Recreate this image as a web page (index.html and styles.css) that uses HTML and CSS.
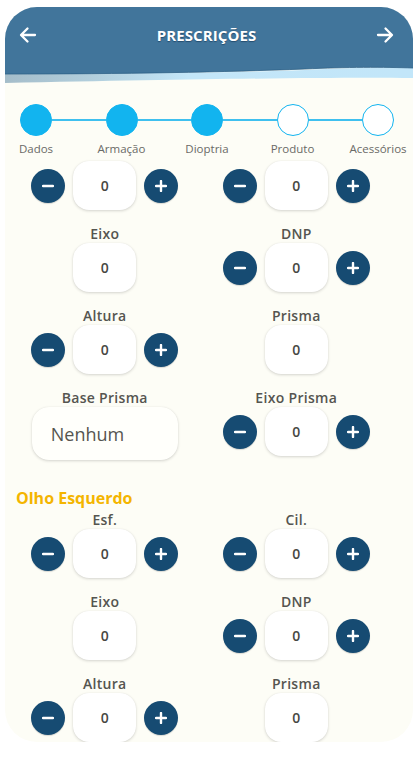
FILE: index.html
```html
<!DOCTYPE html>
<html lang="pt">
<head>
<meta charset="utf-8">
<title>Prescrições</title>
<link rel="stylesheet" href="styles.css">
</head>
<body>
<div class="phone">
  <header class="topbar">
    <svg class="arrow" width="18" height="18" viewBox="0 0 18 18"><path d="M16 9 H2.5 M8.5 2.5 L2 9 L8.5 15.5" fill="none" stroke="#fff" stroke-width="2.3" stroke-linecap="round" stroke-linejoin="round"/></svg>
    <h1 class="title">PRESCRIÇÕES</h1>
    <svg class="arrow" width="18" height="18" viewBox="0 0 18 18"><path d="M2 9 H15.5 M9.5 2.5 L16 9 L9.5 15.5" fill="none" stroke="#fff" stroke-width="2.3" stroke-linecap="round" stroke-linejoin="round"/></svg>
  </header>
  <svg class="wave" width="408" height="22" viewBox="0 0 408 22" preserveAspectRatio="none">
    <defs>
      <linearGradient id="band" x1="0" y1="0" x2="1" y2="0">
        <stop offset="0" stop-color="#a5bdca"/>
        <stop offset="0.22" stop-color="#b2cfdd"/>
        <stop offset="0.45" stop-color="#c3e6f8"/>
        <stop offset="1" stop-color="#c2e6f9"/>
      </linearGradient>
    </defs>
    <path d="M0,11 C120,12 220,11 300,8 C340,6 380,5 408,6 V16 C330,15 200,17 0,21 Z" fill="url(#band)"/>
    <path d="M0,0 H408 V6 C380,5 340,5 300,7 C220,10 120,12 0,12 Z" fill="#41759b"/>
    <path d="M0,12 C120,12 220,10 300,7 C340,5 380,5 408,6" fill="none" stroke="#2f6288" stroke-width="0.8"/>
  </svg>

  <nav class="steps">
    <div class="step"><span class="dot done"></span><span class="step-label">Dados</span></div>
    <span class="link"></span>
    <div class="step"><span class="dot done"></span><span class="step-label">Armação</span></div>
    <span class="link"></span>
    <div class="step"><span class="dot done"></span><span class="step-label">Dioptria</span></div>
    <span class="link"></span>
    <div class="step"><span class="dot"></span><span class="step-label">Produto</span></div>
    <span class="link"></span>
    <div class="step"><span class="dot"></span><span class="step-label">Acessórios</span></div>
  </nav>

  <main class="scroll">
    <section class="eye-grid">
      <div class="field">
        <div class="stepper">
          <button class="btn"><svg width="12" height="12" viewBox="0 0 12 12"><path d="M1 6 H11" stroke="#fff" stroke-width="2.4" stroke-linecap="round"/></svg></button>
          <div class="num-box">0</div>
          <button class="btn"><svg width="12" height="12" viewBox="0 0 12 12"><path d="M1 6 H11 M6 1 V11" stroke="#fff" stroke-width="2.4" stroke-linecap="round"/></svg></button>
        </div>
      </div>
      <div class="field">
        <div class="stepper">
          <button class="btn"><svg width="12" height="12" viewBox="0 0 12 12"><path d="M1 6 H11" stroke="#fff" stroke-width="2.4" stroke-linecap="round"/></svg></button>
          <div class="num-box">0</div>
          <button class="btn"><svg width="12" height="12" viewBox="0 0 12 12"><path d="M1 6 H11 M6 1 V11" stroke="#fff" stroke-width="2.4" stroke-linecap="round"/></svg></button>
        </div>
      </div>

      <div class="field">
        <div class="field-label">Eixo</div>
        <div class="num-box">0</div>
      </div>
      <div class="field">
        <div class="field-label">DNP</div>
        <div class="stepper">
          <button class="btn"><svg width="12" height="12" viewBox="0 0 12 12"><path d="M1 6 H11" stroke="#fff" stroke-width="2.4" stroke-linecap="round"/></svg></button>
          <div class="num-box">0</div>
          <button class="btn"><svg width="12" height="12" viewBox="0 0 12 12"><path d="M1 6 H11 M6 1 V11" stroke="#fff" stroke-width="2.4" stroke-linecap="round"/></svg></button>
        </div>
      </div>

      <div class="field">
        <div class="field-label">Altura</div>
        <div class="stepper">
          <button class="btn"><svg width="12" height="12" viewBox="0 0 12 12"><path d="M1 6 H11" stroke="#fff" stroke-width="2.4" stroke-linecap="round"/></svg></button>
          <div class="num-box">0</div>
          <button class="btn"><svg width="12" height="12" viewBox="0 0 12 12"><path d="M1 6 H11 M6 1 V11" stroke="#fff" stroke-width="2.4" stroke-linecap="round"/></svg></button>
        </div>
      </div>
      <div class="field">
        <div class="field-label">Prisma</div>
        <div class="num-box">0</div>
      </div>

      <div class="field">
        <div class="field-label">Base Prisma</div>
        <div class="select">Nenhum</div>
      </div>
      <div class="field">
        <div class="field-label">Eixo Prisma</div>
        <div class="stepper">
          <button class="btn"><svg width="12" height="12" viewBox="0 0 12 12"><path d="M1 6 H11" stroke="#fff" stroke-width="2.4" stroke-linecap="round"/></svg></button>
          <div class="num-box">0</div>
          <button class="btn"><svg width="12" height="12" viewBox="0 0 12 12"><path d="M1 6 H11 M6 1 V11" stroke="#fff" stroke-width="2.4" stroke-linecap="round"/></svg></button>
        </div>
      </div>
    </section>

    <h2 class="eye-title">Olho Esquerdo</h2>

    <section class="eye-grid">
      <div class="field">
        <div class="field-label">Esf.</div>
        <div class="stepper">
          <button class="btn"><svg width="12" height="12" viewBox="0 0 12 12"><path d="M1 6 H11" stroke="#fff" stroke-width="2.4" stroke-linecap="round"/></svg></button>
          <div class="num-box">0</div>
          <button class="btn"><svg width="12" height="12" viewBox="0 0 12 12"><path d="M1 6 H11 M6 1 V11" stroke="#fff" stroke-width="2.4" stroke-linecap="round"/></svg></button>
        </div>
      </div>
      <div class="field">
        <div class="field-label">Cil.</div>
        <div class="stepper">
          <button class="btn"><svg width="12" height="12" viewBox="0 0 12 12"><path d="M1 6 H11" stroke="#fff" stroke-width="2.4" stroke-linecap="round"/></svg></button>
          <div class="num-box">0</div>
          <button class="btn"><svg width="12" height="12" viewBox="0 0 12 12"><path d="M1 6 H11 M6 1 V11" stroke="#fff" stroke-width="2.4" stroke-linecap="round"/></svg></button>
        </div>
      </div>

      <div class="field">
        <div class="field-label">Eixo</div>
        <div class="num-box">0</div>
      </div>
      <div class="field">
        <div class="field-label">DNP</div>
        <div class="stepper">
          <button class="btn"><svg width="12" height="12" viewBox="0 0 12 12"><path d="M1 6 H11" stroke="#fff" stroke-width="2.4" stroke-linecap="round"/></svg></button>
          <div class="num-box">0</div>
          <button class="btn"><svg width="12" height="12" viewBox="0 0 12 12"><path d="M1 6 H11 M6 1 V11" stroke="#fff" stroke-width="2.4" stroke-linecap="round"/></svg></button>
        </div>
      </div>

      <div class="field">
        <div class="field-label">Altura</div>
        <div class="stepper">
          <button class="btn"><svg width="12" height="12" viewBox="0 0 12 12"><path d="M1 6 H11" stroke="#fff" stroke-width="2.4" stroke-linecap="round"/></svg></button>
          <div class="num-box">0</div>
          <button class="btn"><svg width="12" height="12" viewBox="0 0 12 12"><path d="M1 6 H11 M6 1 V11" stroke="#fff" stroke-width="2.4" stroke-linecap="round"/></svg></button>
        </div>
      </div>
      <div class="field">
        <div class="field-label">Prisma</div>
        <div class="num-box">0</div>
      </div>
    </section>
  </main>
</div>
</body>
</html>
```

FILE: styles.css
```css
* { box-sizing: border-box; }

html, body {
  margin: 0;
  padding: 0;
  background: #ffffff;
}

body {
  font-family: "Open Sans", "Noto Sans", sans-serif;
  height: 768px;
  overflow: hidden;
}

.phone {
  margin: 7px 0 0 5px;
  width: 408px;
  height: 735px;
  border-radius: 32px;
  overflow: hidden;
  background: #fdfdf6;
  display: flex;
  flex-direction: column;
}

.topbar {
  height: 55px;
  flex: none;
  background: #41759b;
  display: flex;
  align-items: center;
  justify-content: space-between;
  padding: 0 19px 0 14px;
}

.arrow { display: block; }

.title {
  margin: 0;
  color: #ffffff;
  font-size: 15px;
  font-weight: 700;
  letter-spacing: 0.1px;
  text-shadow: 0 1px 1px rgba(0, 30, 60, 0.45);
}

.wave {
  display: block;
  flex: none;
}

.steps {
  flex: none;
  display: flex;
  align-items: flex-start;
  padding: 0 19px 0 15px;
  margin-top: 20px;
}

.step {
  width: 32px;
  flex: none;
  display: flex;
  flex-direction: column;
  align-items: center;
}

.dot {
  width: 32px;
  height: 32px;
  border-radius: 50%;
  border: 1.6px solid #12b4ef;
  background: #ffffff;
}

.dot.done {
  background: #12b4ef;
}

.link {
  flex: 1;
  height: 1.6px;
  margin-top: 15.2px;
  background: #3fc0ef;
}

.step-label {
  margin-top: 6px;
  font-size: 11.5px;
  line-height: 14px;
  color: #6a6a66;
  white-space: nowrap;
}

.scroll {
  flex: 1;
  overflow: hidden;
  padding: 5px 21px 0 4px;
}

.eye-grid {
  display: grid;
  grid-template-columns: 1fr 1fr;
  row-gap: 15px;
}

.field {
  display: flex;
  flex-direction: column;
  align-items: center;
}

.field-label {
  font-size: 14px;
  line-height: 18px;
  font-weight: 600;
  color: #555550;
  letter-spacing: 0.3px;
}

.stepper {
  display: flex;
  align-items: center;
  gap: 8px;
}

.btn {
  width: 34px;
  height: 34px;
  padding: 0;
  border: none;
  border-radius: 50%;
  background: #164b72;
  display: flex;
  align-items: center;
  justify-content: center;
  box-shadow: 0 1px 1px rgba(0, 0, 0, 0.15);
}

.btn svg { display: block; }

.num-box {
  width: 63px;
  height: 49px;
  border-radius: 16px;
  background: #ffffff;
  box-shadow: 0 1px 3px rgba(0, 0, 0, 0.16), 0 0 1px rgba(0, 0, 0, 0.08);
  display: flex;
  align-items: center;
  justify-content: center;
  font-size: 14px;
  font-weight: 600;
  color: #474743;
}

.select {
  width: 146px;
  height: 53px;
  border-radius: 17px;
  background: #fffffb;
  box-shadow: 0 1px 3px rgba(0, 0, 0, 0.16), 0 0 1px rgba(0, 0, 0, 0.08);
  display: flex;
  align-items: center;
  padding-left: 19px;
  font-size: 18px;
  color: #555550;
}

.eye-title {
  margin: 28px 0 3px 7px;
  font-size: 16px;
  line-height: 20px;
  font-weight: 700;
  color: #f4b500;
}
```
